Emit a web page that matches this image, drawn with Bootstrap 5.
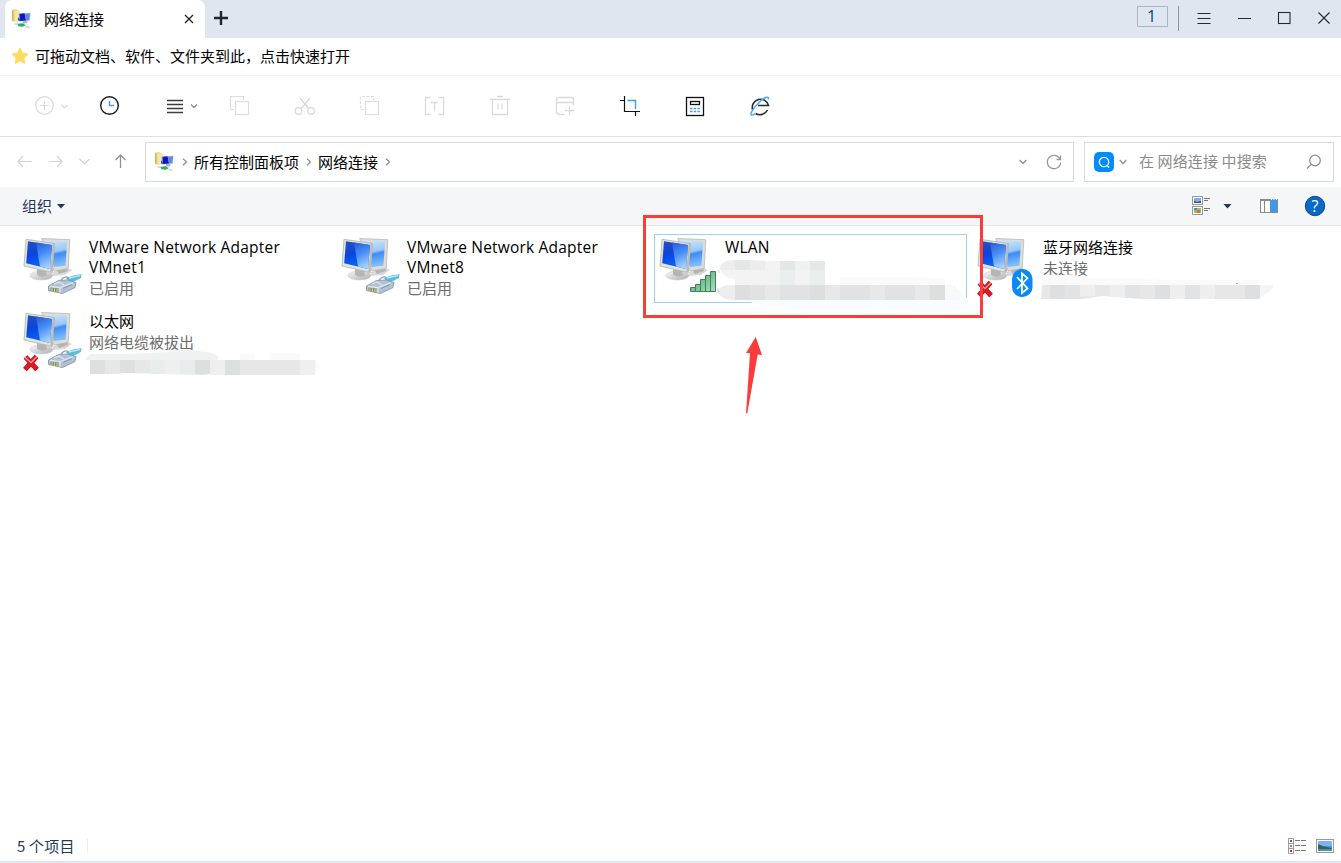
<!DOCTYPE html>
<html lang="zh-CN">
<head>
<meta charset="utf-8">
<title>网络连接</title>
<link href="https://cdn.jsdelivr.net/npm/bootstrap@5.3.0/dist/css/bootstrap.min.css" rel="stylesheet">
<style>
body{font-family:"Open Sans","Noto Sans CJK SC",sans-serif;font-size:15px;line-height:20px;color:#000;background:#fff;height:863px;overflow:hidden}
.cjk{font-family:"Noto Sans CJK SC","Noto Sans",sans-serif}
svg{display:block;flex:none}
.titlebar{height:38px;background:#dfe6f0;padding-left:5px}
.win-tab{width:200px;height:38px;background:#fff;border-radius:7px 7px 0 0;padding-left:6px}
.tab-count{width:31px;height:21px;border:1px solid #adb5c1;font-size:16px;line-height:19px;color:#0d3f74;margin-top:-5px;padding-right:2px}
.vline{width:1px;height:25px;background:#8d949d;margin:-2px 0 0 10px}
.favbar{height:38px;border-bottom:1px solid #f2f2f3;padding:0 0 2px 11px}
.tools{height:61px;border-bottom:1px solid #dcdee1;padding-left:12px}
.addr-row{height:50px;padding:5px 7px 6px 0}
.addr,.find{height:40px;border:1px solid #d9dadc}
.addr{width:929px}
.find{width:250px;margin-left:10px;color:#8b8b8b}
.find span{letter-spacing:.12px;margin:-2px 0 0 12px}
.cmdbar{height:39px;background:#f4f6f8;border-bottom:1px solid #e4e6e8;color:#1e395b;padding-left:22px}
.files{display:grid;grid-template-columns:repeat(4,313px);grid-auto-rows:69px;gap:5px;padding:8px 0 0 18px;align-content:start}
.tile{position:relative;display:flex;padding-left:2px;min-width:0}
.tile-text{padding:3px 0 0 5px;width:225px;white-space:nowrap}
.latin{font-size:15.5px;letter-spacing:.2px}
.sub{color:#6d6d6d;line-height:21px}
.picked{box-shadow:inset 0 0 0 1px #99d1ff;z-index:2}
.smudge{position:absolute;left:0;top:0;overflow:visible}
.marker{position:absolute;left:-11px;top:-19px}
.statusbar{height:33px;border-bottom:2px solid #dfe7f1;color:#1e395b;padding-left:17px;padding-right:7px}
</style>
<script src="https://cdn.jsdelivr.net/npm/bootstrap@5.3.0/dist/js/bootstrap.bundle.min.js"></script>
</head>
<body class="d-flex flex-column">
<svg width="0" height="0" style="position:absolute">
<defs>
<linearGradient id="scr" x1="0" y1="0" x2=".3" y2="1"><stop offset="0" stop-color="#2a4fb8"/><stop offset=".5" stop-color="#0a45dd"/><stop offset="1" stop-color="#0768fb"/></linearGradient>
<linearGradient id="shine" x1=".2" y1="0" x2=".5" y2="1"><stop offset="0" stop-color="#2c60da"/><stop offset=".45" stop-color="#478ef8"/><stop offset="1" stop-color="#a5d2ff"/></linearGradient>
<linearGradient id="scr2" x1="0" y1="0" x2=".2" y2="1"><stop offset="0" stop-color="#d3e9fc"/><stop offset=".5" stop-color="#97c8fa"/><stop offset=".6" stop-color="#3f8bf5"/><stop offset="1" stop-color="#7bbcff"/></linearGradient>
<linearGradient id="base" x1="0" y1="0" x2="1" y2="1"><stop offset="0" stop-color="#fafafa"/><stop offset="1" stop-color="#adadad"/></linearGradient>
<linearGradient id="bar" x1="0" y1="0" x2="1" y2="1"><stop offset="0" stop-color="#4a9c6c"/><stop offset="1" stop-color="#a5e3b8"/></linearGradient>
<symbol id="pcs" viewBox="0 0 64 66">
<path d="M33 38l15-4 4 2-7 5-12 1z" fill="#d9d9d9"/><path d="M36 35l11-2 1 4-9 3z" fill="#b3b3b3"/>
<path d="M21.700 4.500l28.100 1.200-1.600 28.800L34 37z" fill="#dcdcd8" stroke="#b9b9b5" stroke-width=".8"/>
<path d="M24 6.300l23 1.400-1.500 23.800L34 33z" fill="url(#scr2)"/>
<ellipse cx="21.500" cy="41.500" rx="11.500" ry="4.500" fill="url(#base)" stroke="#ccc" stroke-width=".6"/>
<path d="M17 35l9 2 1 4.500q-5 2.500-10-.5z" fill="#b5b5b5"/>
<path d="M6 5.300l28.500 4.200-2.200 29L4 32z" fill="#e3e3df" stroke="#b0b0ac" stroke-width=".8"/>
<path d="M32.500 10l2-.4-2.200 29-2-.6z" fill="#bcbcb8"/>
<path d="M8 7.300l24 3.800-2 23.900-23.800-5.700z" fill="url(#scr)"/>
<path d="M16 8.600l16 2.500-2 23.900-10-2.400z" fill="url(#shine)"/>
</symbol>
<symbol id="plug" viewBox="0 0 64 66">
<path d="M41 46q4-5 8-2l5 1" fill="none" stroke="#8fa5bb" stroke-width="1.400"/>
<path d="M46 44l9-3 6.500-.7-.5 3.700-7 3.500-5 1z" fill="#59bbdd"/><path d="M49 44l11-2.500" stroke="#b3e8f7" stroke-width="1.500"/>
<path d="M28.500 52l10-5.500 9-.5 8.500 2.500-1 5-12.500 6-14-3z" fill="#b2c2d4" stroke="#8796aa" stroke-width=".9"/>
<path d="M30 52.500l10 1.200 13-5M40 53.700v5M34 50l5-2 5 3" fill="none" stroke="#dbe6f0" stroke-width="1.300"/><path d="M43 54.500l9-4" stroke="#8194ac" stroke-width="1"/>
<path d="M30.500 53.500l8 1.300-.5 3.400-7.500-1.700z" fill="#7c8b5c"/><path d="M32 54v3m2.500-2.500v3m2.500-2.500v3" stroke="#dfdb84" stroke-width="1"/>
</symbol>
<symbol id="cross" viewBox="0 0 64 66">
<path d="M5.500 49l11.500 12.500M16.500 48.500L5 61.500" stroke="#b0141a" stroke-width="5"/>
<path d="M5.500 49l11.500 12.500M16.500 48.500L5 61.500" stroke="#e0181f" stroke-width="3.800"/><path d="M4.500 49l6.500 5.500L17 48.500" fill="none" stroke="#f59a9c" stroke-width="1.300"/>
</symbol>
<symbol id="netfolder" viewBox="0 0 20 20">
<path d="M1 .8L5 0l3.500 2v9.500L4 13l-3-1.500z" fill="#ecd98a"/><path d="M3.500 2.200L8.500 2v10L4 13.200z" fill="#f5e7a4"/><path d="M1 1v10.500l1.500.8V1.500z" fill="#cfb65c"/>
<path d="M7.500 4.200l12-.4-.6 8-10.900.8z" fill="#a6b8e4"/><path d="M8.500 5l5-.8 1.500 7.300-6 .5z" fill="#1018bd"/><path d="M14 5l5-.5-1 6.300-3 .5z" fill="#5f86ea"/><path d="M7 8l3 4-3-.5z" fill="#3346c4"/>
<path d="M12 12h4.500v2H12z" fill="#b3b7bc"/><path d="M3.500 15h12M14.500 18h4" stroke="#b2bdb5" stroke-width="1"/><path d="M6.500 15.300l5.500-1 2.500 2.200-3 1.300-4-.6z" fill="#1fb758"/>
</symbol>
<symbol id="chev" viewBox="0 0 8 6"><path d="M.7 1L4 4.500 7.300 1" fill="none" stroke="currentColor" stroke-width="1.300"/></symbol>
<symbol id="rchev" viewBox="0 0 6 8"><path d="M1 .7L4.500 4 1 7.300" fill="none" stroke="#8c8c8c" stroke-width="1.200"/></symbol>
</defs>
</svg>

<!-- Tab strip and window buttons -->
<header class="titlebar d-flex align-items-center flex-shrink-0">
<div class="win-tab d-flex align-items-center cjk">
<svg width="20" height="20"><use href="#netfolder"/></svg>
<span style="margin-left:13px">网络连接</span>
<svg class="ms-auto" width="10" height="10" style="margin-right:11px" viewBox="0 0 10 10"><path d="M1 1l8 8M9 1L1 9" stroke="#222" stroke-width="1.300"/></svg>
</div>
<svg width="16" height="16" style="margin:-2px 0 0 8px" viewBox="0 0 16 16"><path d="M1 8h14M8 1v14" stroke="#20252b" stroke-width="2.400"/></svg>
<div class="tab-count ms-auto text-center">1</div>
<div class="vline"></div>
<svg width="162" height="38" viewBox="0 0 162 38"><g fill="none" stroke="#242a31" stroke-width="1.100"><path d="M18.500 13.500h13M18.500 18.500h13M18.500 23.500h13M59 18.500h13"/><rect x="99.500" y="12.500" width="11.500" height="11"/><path d="M139.500 12.500l11 11M150.500 12.500l-11 11"/></g></svg>
</header>

<div class="favbar d-flex align-items-center flex-shrink-0 cjk">
<svg width="18" height="18" viewBox="0 0 18 18"><path d="M9 1.500l2.300 4.800 5.200.7-3.800 3.700.9 5.300L9 13.500 4.400 16l.9-5.300L1.500 7l5.200-.7z" fill="#ffdb66" stroke="#ffdb66" stroke-width="1.500" stroke-linejoin="round"/></svg>
<span style="margin-left:6px">可拖动文档、软件、文件夹到此，点击快速打开</span>
</div>

<!-- Each tool is a 65px cell with its glyph centred -->
<nav class="tools d-flex flex-shrink-0">
<svg width="65" height="60" fill="none" stroke="#dadada" stroke-width="1.200"><circle cx="32.500" cy="29.500" r="8.800"/><path d="M28 29.500h9M32.500 25v9M49.500 29l3 3 3-3"/></svg>
<svg width="65" height="60" fill="none" stroke="#17191c" stroke-width="1.400"><circle cx="32.500" cy="29.500" r="8.800"/><path d="M32.500 25v4.500h4.500" stroke="#3d9ff5" stroke-width="1.400"/></svg>
<svg width="65" height="60" fill="none" stroke="#3b3d40" stroke-width="1.300"><path d="M25 24.500h16M25 28.500h16M25 32.500h16M25 36.500h16"/><path d="M49 28.500l3 3 3-3" stroke="#8c8c8c"/></svg>
<svg width="65" height="60" fill="none" stroke="#dcdcdc" stroke-width="1.200"><path d="M27 33.500h-3.500v-13h13V24"/><rect x="28.500" y="25.500" width="13" height="13"/></svg>
<svg width="65" height="60" fill="none" stroke="#d8d8d8" stroke-width="1.200"><path d="M28 22l9 11M38 22l-9 11"/><circle cx="26.500" cy="35" r="3.300"/><circle cx="39" cy="35" r="3.300"/></svg>
<svg width="65" height="60" fill="none" stroke="#dcdcdc" stroke-width="1.200"><path d="M27 33.500h-3.500v-13h13V24" stroke-dasharray="3 1.500"/><rect x="28.500" y="25.500" width="13" height="13"/></svg>
<svg width="65" height="60" fill="none" stroke="#dadada" stroke-width="1.300"><path d="M28.500 21.500h-5v17h5M36.500 21.500h5v17h-5M29 26.500h7M32.500 26.500v9"/></svg>
<svg width="65" height="60" fill="none" stroke="#dadada" stroke-width="1.300"><path d="M23 23.500h20M30 20.500h6M25.500 23.500v15h15v-15M31 27.500v6M35 27.500v6"/></svg>
<svg width="65" height="60" fill="none" stroke="#dadada" stroke-width="1.300"><path d="M32.500 38.500h-5a3 3 0 0 1-3-3v-12a2 2 0 0 1 2-2h13a2 2 0 0 1 2 2v5.500M24.500 26.500h17M33 34.500h9M37.500 30v9"/></svg>
<svg width="65" height="60" fill="none" stroke="#111" stroke-width="1.200"><path d="M23 24.500h4.500M27.500 20v15.500h15.500M38.500 35.500V40"/><path d="M30.500 24.500h8V33" stroke="#3d9ff5" stroke-width="1.400"/></svg>
<svg width="65" height="60" fill="none" stroke="#111" stroke-width="1.300"><rect x="24.500" y="21.500" width="17" height="18"/><rect x="28.500" y="25.500" width="9" height="3"/><path d="M28 32.500h10M28 35.500h10" stroke="#3d9ff5" stroke-width="1.700" stroke-dasharray="2.500 1.200"/></svg>
<svg width="65" height="60" fill="none" stroke="#2b2b2b" stroke-width="1.600"><path d="M25.500 33.500A8 8 0 1 1 41.500 29.500H31M40.500 34a8.500 8.500 0 0 1-12 3.500"/><path d="M41 23.500c2-4-3-3-9 3s-9.500 11.500-7.500 12.500c1 .3 3-.7 4-1.500" stroke="#4aa6f5" stroke-width="1.400"/></svg>
</nav>

<!-- Navigation, breadcrumb and search -->
<div class="addr-row d-flex flex-shrink-0">
<svg width="145" height="40" viewBox="0 0 145 40" fill="none" stroke="#d2d2d2" stroke-width="1.200"><path d="M18 19.500h13.500M23 14l-5 5.500 5 5.500M49 19.500h13.500M57 14l5 5.500-5 5.500M79.500 17l5 5 5-5"/><path d="M120.500 26V13M115.500 18l5-5 5 5" stroke="#929292" stroke-width="1.300"/></svg>
<div class="addr d-flex align-items-center cjk">
<svg width="20" height="20" style="margin-left:8px"><use href="#netfolder"/></svg>
<svg width="6" height="8" style="margin-left:8px"><use href="#rchev"/></svg>
<span style="margin-left:6px">所有控制面板项</span>
<svg width="6" height="8" style="margin-left:7px"><use href="#rchev"/></svg>
<span style="margin-left:6px">网络连接</span>
<svg width="6" height="8" style="margin-left:7px"><use href="#rchev"/></svg>
<svg class="ms-auto" width="8" height="6" style="color:#8c8c8c;margin-right:19px"><use href="#chev"/></svg>
<svg width="16" height="16" style="margin-right:11px" viewBox="0 0 16 16" fill="none" stroke="#999" stroke-width="1.300"><path d="M14 5A6.700 6.700 0 1 0 14.700 8.500M14.500 1.500V5.500h-4"/></svg>
</div>
<div class="find d-flex align-items-center cjk">
<svg width="20" height="20" style="margin-left:9px" viewBox="0 0 20 20"><rect width="20" height="20" rx="5" fill="#008cff"/><circle cx="10" cy="10" r="4.700" fill="none" stroke="#fff" stroke-width="1.300"/><path d="M12.700 13.500l2.500 2" stroke="#fff" stroke-width="1.300"/></svg>
<svg width="8" height="6" style="color:#8b8b8b;margin-left:5px"><use href="#chev"/></svg>
<span>在 网络连接 中搜索</span>
<svg class="ms-auto" width="16" height="16" style="margin-right:11px" viewBox="0 0 16 16" fill="none" stroke="#8a8a8a" stroke-width="1.200"><circle cx="9" cy="6.500" r="5.300"/><path d="M5.200 10.300L1 14.500"/></svg>
</div>
</div>

<div class="cmdbar d-flex align-items-center flex-shrink-0 cjk">
<span>组织</span>
<svg width="8" height="5" style="margin-left:5px"><path d="M0 0h8L4 4.500z" fill="#1e395b"/></svg>
<svg class="ms-auto" width="150" height="38" viewBox="0 0 150 38">
<g fill="#fff" stroke="#9a9a9a"><rect x="1.500" y="9.500" width="10" height="8"/><rect x="1.500" y="19.500" width="10" height="8"/></g>
<path d="M3 11h7v3H3z" fill="#7fb0ec"/><path d="M3 14l3 .5 4-.5v2H3z" fill="#2d5577"/><path d="M3 21h7v5H3z" fill="#a7b961"/><path d="M3 21h3v2H3z" fill="#4d80c4"/><path d="M6 23h3v3H6z" fill="#c9764a"/>
<path d="M13 11.500h6M13 13.500h4M13 21.500h6M13 23.500h4" stroke="#777"/>
<path d="M32.500 17h8l-4 4.500z" fill="#1e395b"/>
<rect x="69.500" y="12.500" width="17" height="13" fill="#fff" stroke="#858b91"/><path d="M70 13.500h16M73.500 14v12" stroke="#858b91"/><path d="M79 13h7v12h-7z" fill="#4398e4"/><path d="M80 12.500h1M82.500 12.500h1M85 12.500h1" stroke="#fff"/>
<circle cx="124" cy="19" r="9.700" fill="#0869c9" stroke="#064a91"/>
<text x="124" y="24.500" text-anchor="middle" font-family="Open Sans,sans-serif" font-size="16" fill="#fff">?</text>
</svg>
</div>

<main class="files flex-grow-1">
<div class="tile"><svg width="64" height="66"><use href="#pcs"/><use href="#plug"/></svg><div class="tile-text"><div class="latin">VMware Network Adapter<br>VMnet1</div><div class="sub cjk">已启用</div></div></div>
<div class="tile"><svg width="64" height="66"><use href="#pcs"/><use href="#plug"/></svg><div class="tile-text"><div class="latin">VMware Network Adapter<br>VMnet8</div><div class="sub cjk">已启用</div></div></div>

<div class="tile picked">
<svg width="64" height="66"><use href="#pcs"/><g fill="url(#bar)" stroke="#417f5b"><path d="M34.500 53.500h5v4h-5zM39.500 50.500h5v7h-5zM44.500 45.500h5v12h-5zM49.500 41.500h5v16h-5zM54.500 37.500h5v20h-5z"/></g></svg>
<div class="tile-text latin">WLAN</div>
<svg class="smudge" width="313" height="69">
<path d="M97 65h210q8-7 7 8 0 5-35 5-28 1-50-5-60 7-100 0-22 1-32-5z" fill="#f8fbff"/>
<path d="M81 26q-14-1-15 8 3 11 15 11v6h90V27h-60l-15-1z" fill="#f3f3f3"/>
<path d="M81 26h15v10H81z" fill="#e5e7e7"/><path d="M66 34q2-8 15-8v10H66zM96 26l15 1v9H96z" fill="#ececec"/><path d="M126 27h15v9h-15z" fill="#e5e6e6"/><path d="M156 27h15v9h-15z" fill="#e6e8e8"/><path d="M141 27h15v9h-15z" fill="#f0f2f2"/><path d="M126 36h15v15h-15zM156 36h15v15h-15z" fill="#ebeeee"/>
<path d="M186 43l60 0 45 1v7H186z" fill="#fafafa"/>
<path d="M81 51q-15-1-17 6 2 9 17 9z" fill="#ededed"/><path d="M81 51h210v15H81z" fill="#e2e2e2"/>
<path d="M81 51h15v15H81zM156 51h15v15h-15zM276 51h15v15h-15z" fill="#dddede"/><path d="M111 51h15v15h-15zM171 51h15v15h-15z" fill="#e8e8e8"/><path d="M216 51h15v15h-15zM261 51h15v15h-15z" fill="#e7e8e9"/><path d="M291 51h11v3l6 4-2 8h-15z" fill="#f7f8fa"/>
<path d="M65 36v3M64 54v5" stroke="#b5dbbd"/>
</svg>
<svg class="marker" width="340" height="200" viewBox="0 0 340 200"><rect x="1.500" y="1.500" width="337" height="100" fill="none" stroke="#fa3c3b" stroke-width="3"/><path d="M112.700 122L119 140l-4.300-.5L104.300 198.300h-1.300l4-60-4-.3z" fill="#fa3c3b"/></svg>
</div>

<div class="tile"><svg width="64" height="66"><use href="#pcs"/><use href="#cross"/><rect x="38" y="35" width="20.500" height="28" rx="10" fill="#0789f7"/><path d="M43 43l10.500 11.500-5.500 4.500V39.500l5.500 4.500L43 55" fill="none" stroke="#fff" stroke-width="1.800"/></svg>
<div class="tile-text cjk">蓝牙网络连接<div class="sub">未连接</div></div>
<svg class="smudge" width="313" height="69"><path d="M70 41h32q5 0 10 3h45l35 2 94 0v5H70z" fill="#fafafa"/><path d="M70 51h218v14H170l-39-3-20 3H69z" fill="#e7e7e8"/><path d="M78 51h15v14H78zM183 51h15v14h-15zM273 51h15v14h-15z" fill="#dedfe1"/><path d="M93 51h15v14H93zM153 51h15v13h-15zM213 51h15v14h-15z" fill="#e2e3e5"/><path d="M108 51h15v11h-15zM138 51h15v12h-15zM198 51h15v14h-15zM228 51h15v14h-15z" fill="#eeeeef"/><path d="M288 51h14q-3 8-14 12z" fill="#f5f5f5"/><path d="M264.500 49.500h1" stroke="#765c49"/></svg>
</div>

<div class="tile"><svg width="64" height="66"><use href="#pcs"/><use href="#plug"/><use href="#cross"/></svg>
<div class="tile-text cjk">以太网<div class="sub">网络电缆被拔出</div></div>
<svg class="smudge" width="313" height="69"><path d="M67 52l5-6h37l41-2q14-4 30-1 15 1 20 5v4z" fill="#f0f1f1"/><path d="M222 46h15v6h-15zM252 45h30v7h-30z" fill="#fafafa"/><path d="M72 52h225v15H207q-7-5-20 0l-80-2-8 1H72z" fill="#e7e7e7"/><path d="M72 52h15v14H72zM102 52h15v13h-15zM207 52h15v15h-15z" fill="#dedfdf"/><path d="M132 52h15v14h-15zM162 52h15v14h-15z" fill="#e8ecec"/><path d="M147 52h15v14h-15zM192 52h15v15h-15zM282 52h15v15h-15z" fill="#efefef"/><path d="M177 52h15v14h-15z" fill="#dddede"/><path d="M297 52q9 7 0 14z" fill="#fafafa"/></svg>
</div>
</main>

<footer class="statusbar d-flex align-items-center flex-shrink-0 cjk">
<span style="letter-spacing:.2px">5 个项目</span><span style="width:1px;height:13px;background:#e9edf1;margin-left:12px"></span>
<svg class="ms-auto" width="46" height="18" viewBox="0 0 46 18"><path d="M.5 1.500h5v15h-5zM.5 6.500h5M.5 11.500h5" fill="#fff" stroke="#999"/><path d="M2 4h2" stroke="#3779a5" stroke-width="2"/><path d="M2 9h2" stroke="#8a963d" stroke-width="2"/><path d="M2 14h2" stroke="#bd3a22" stroke-width="2"/><path d="M7 3.500h5M13 3.500h5M7 8.500h5M13 8.500h5M7 13.500h5M13 13.500h5" stroke="#777"/><rect x="28.500" y="2.500" width="17" height="13" fill="#fff" stroke="#999"/><path d="M30 4h14v5H30z" fill="#7db3fb"/><path d="M30 9h14v5H30z" fill="#4f8fb5"/><path d="M30 7l5 2 9 2.500v.5l-14 0z" fill="#33664f"/></svg>
</footer>
</body>
</html>
